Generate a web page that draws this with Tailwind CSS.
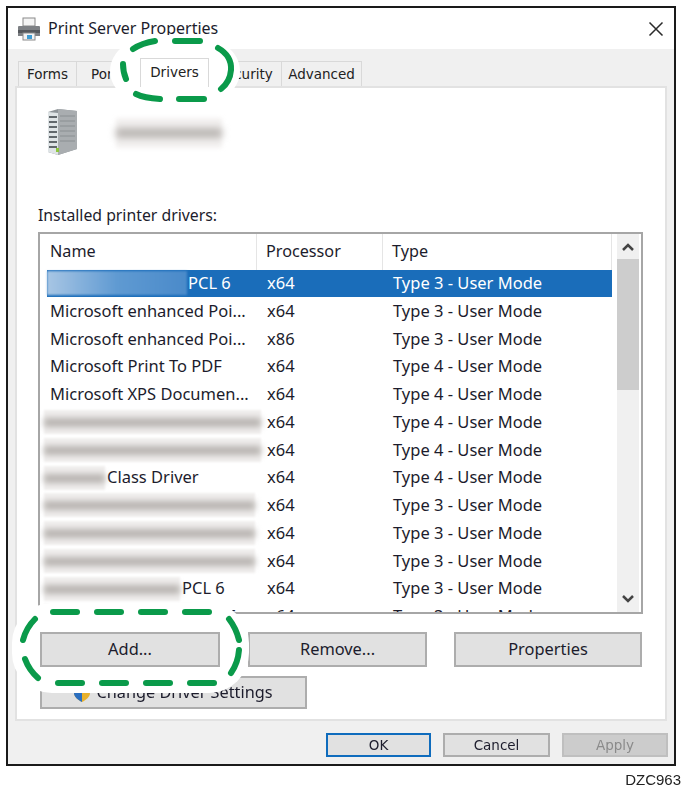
<!DOCTYPE html>
<html lang="en">
    <head>
        <meta charset="UTF-8">
        <meta name="viewport" content="width=device-width, initial-scale=1.0">
        <title>Print Server Properties</title>
        <script src="https://cdn.jsdelivr.net/npm/@tailwindcss/browser@4"></script>
    </head>
    <body class="bg-white h-[803px] w-[683px] overflow-hidden relative blur-[0.4px] font-['Noto_Sans',sans-serif] text-[#1c1c2c]">

        <!-- Dialog window -->
        <div class="ml-[6px] mt-[6px] w-[670px] h-[760px] border-2 border-[#1a1a1a] bg-[#f0f0f0] flex flex-col">

            <!-- Title bar -->
            <div class="h-[41px] bg-white flex items-center pl-[9px] pr-[10px] shrink-0">
                <svg class="w-[24px] h-[24px] mt-[1px]" viewBox="0 0 24 24">
                    <rect x="6" y="1" width="12" height="8" fill="#f4f4f4" stroke="#8a8a8a"/>
                    <path d="M2 9h20a1 1 0 0 1 1 1v9h-22v-9a1 1 0 0 1 1-1z" fill="#7d8084"/>
                    <rect x="1" y="13" width="22" height="3" fill="#55585c"/>
                    <rect x="6" y="16" width="12" height="7" fill="#f2f2f2" stroke="#8a8a8a"/>
                    <rect x="10" y="18" width="5" height="4" fill="#3f9bd0"/>
                </svg>
                <span class="ml-[7px] text-[16px] leading-none -mt-[2px]">Print Server Properties</span>
                <svg class="w-[16px] h-[16px] ml-auto" viewBox="0 0 16 16">
                    <path d="M1.500 1.500 14.500 14.500M14.500 1.500 1.500 14.500" stroke="#2a2a2a" stroke-width="1.500" fill="none"/>
                </svg>
            </div>

            <!-- Tabs and page -->
            <div class="flex-1 flex flex-col px-[7px] pt-[12px]">
                <div class="h-[25px] flex pl-[3px] font-['DejaVu_Sans',sans-serif] text-[13.5px] text-[#222]">
                    <div class="w-[59px] border border-b-0 border-[#d9d9d9] flex items-center justify-center">Forms</div>
                    <div class="w-[63px] border border-b-0 border-l-0 border-[#d9d9d9] flex items-center justify-center">Ports</div>
                    <div class="w-[69px] -mt-[3px] h-[29px] -mb-[1px] pb-[2px] z-20 bg-white border border-b-0 border-[#d9d9d9] flex items-center justify-center">Drivers</div>
                    <div class="w-[73px] border border-b-0 border-l-0 border-[#d9d9d9] flex items-center justify-center">Security</div>
                    <div class="w-[80px] border border-b-0 border-l-0 border-[#d9d9d9] flex items-center justify-center">Advanced</div>
                </div>

                <div class="h-[635px] bg-white border-2 border-[#e2e2e2] pl-[21px] pr-[21px] shrink-0">
                    <!-- Server name -->
                    <div class="flex items-start pt-[20px] pl-[9px] h-[100px]">
                        <svg class="w-[31px] h-[48px]" viewBox="0 0 31 48">
                            <path d="M1 4 11 1 30 3V41L11 47 1 44Z" fill="#8e9498"/>
                            <path d="M11 1 30 3V41L11 47Z" fill="#a9adb0"/>
                            <path d="M1 4 11 5V47L1 44Z" fill="#dfe4e6"/>
                            <path d="M2 9h8M2 14h8M2 19h8M2 24h8M2 29h8M2 34h8M2 39h8" stroke="#62686c" stroke-width="2"/>
                            <path d="M13 8h15M13 13h15M13 18h15M13 23h15M13 28h15M13 33h15" stroke="#8a8f92" stroke-width="1"/>
                            <rect x="9" y="40" width="3" height="4" fill="#8cc63f"/>
                        </svg>
                        <div class="relative ml-[38px] mt-[10px] w-[106px] h-[30px] bg-[#f3f1f0] blur-[2px]">
                            <div class="absolute inset-x-0 top-[10px] h-[10px] bg-[#b9b5b2] blur-[3px]"></div>
                        </div>
                    </div>

                    <p class="text-[15.8px] leading-[20px] mt-[17px] mb-[7px]">Installed printer drivers:</p>

                    <!-- Driver list -->
                    <div class="w-[605px] h-[382px] border-2 border-[#a6a6a6] flex overflow-hidden">
                        <div class="w-[577px] shrink-0 pl-[7px]">
                            <div class="h-[35.5px] flex items-center text-[16.2px] -ml-[7px] w-[572px]">
                                <div class="w-[217px] pl-[10px] h-full pb-[1px] flex items-center border-r border-[#e5e5e5]">Name</div>
                                <div class="w-[126px] pl-[9px] h-full pb-[1px] flex items-center border-r border-[#e5e5e5]">Processor</div>
                                <div class="flex-1 pl-[9px] h-full pb-[1px] flex items-center border-r border-[#e5e5e5]">Type</div>
                            </div>
                            <div id="rows"></div>
                        </div>
                        <!-- Scrollbar -->
                        <div class="w-[22px] bg-[#f0f0f0] flex flex-col items-center shrink-0">
                            <div class="h-[25px] w-full flex items-center justify-center">
                                <svg class="w-[12px] h-[8px]" viewBox="0 0 12 8"><path d="M1 7 6 2 11 7" stroke="#444" stroke-width="2.500" fill="none"/></svg>
                            </div>
                            <div class="h-[131px] w-full bg-[#cdcdcd]"></div>
                            <div class="flex-1"></div>
                            <div class="h-[25px] w-full flex items-center justify-center mb-[1px]">
                                <svg class="w-[12px] h-[8px]" viewBox="0 0 12 8"><path d="M1 1 6 6 11 1" stroke="#444" stroke-width="2.500" fill="none"/></svg>
                            </div>
                        </div>
                    </div>

                    <!-- Action buttons -->
                    <div class="flex mt-[18px] ml-[2px] text-[16.4px]">
                        <button class="relative z-20 w-[180px] h-[35px] bg-[#e1e1e1] border-2 border-[#adadad]">Add...</button>
                        <button class="w-[179px] h-[35px] ml-[28px] bg-[#e1e1e1] border-2 border-[#adadad]">Remove...</button>
                        <button class="w-[188px] h-[35px] ml-[27px] bg-[#e1e1e1] border-2 border-[#adadad]">Properties</button>
                    </div>
                    <button class="ml-[2px] mt-[9px] w-[267px] h-[33px] bg-[#e1e1e1] border-2 border-[#adadad] flex items-center justify-center gap-[6px] text-[16.3px]">
                        <svg class="w-[16px] h-[18px]" viewBox="0 0 16 18">
                            <path d="M8 0 16 3V9C16 13 12 16 8 18 4 16 0 13 0 9V3Z" fill="#e8b12c"/>
                            <path d="M8 0 16 3V9H8ZM8 9V18C4 16 0 13 0 9Z" fill="#2b6fc0"/>
                        </svg>
                        Change Driver Settings
                    </button>
                </div>

                <!-- Dialog buttons -->
                <div class="flex justify-end gap-[12px] mt-[12px] -mr-[1px] font-['DejaVu_Sans',sans-serif] text-[13.5px]">
                    <button class="w-[105px] h-[24px] pb-[2px] bg-[#e1e1e1] border-2 border-[#0f6cbd]">OK</button>
                    <button class="w-[107px] h-[24px] pb-[2px] bg-[#e1e1e1] border-2 border-[#adadad]">Cancel</button>
                    <button class="w-[106px] h-[24px] pb-[2px] bg-[#cccccc] border-2 border-[#bfbfbf] text-[#8a8a8a]">Apply</button>
                </div>
            </div>
        </div>

        <p class="text-right pr-[2px] mt-[5px] font-['Liberation_Sans',sans-serif] text-[15px] leading-[17px] text-[#222]">DZC963</p>

        <!-- Callouts around the Drivers tab and the Add button -->
        <svg class="absolute left-0 top-0 z-10 w-[683px] h-[803px] pointer-events-none" viewBox="0 0 683 803">
            <rect x="110" y="35" width="130" height="72" rx="48" fill="#fff"/>
            <rect x="12" y="603" width="237" height="90" rx="40" fill="#fff"/>
            <g fill="none" stroke="#0a9a4a" stroke-width="6" stroke-linecap="round">
                <path d="M133 49Q142 43 155 41"/>
                <path d="M175 41H200"/>
                <path d="M218 48Q232 56 231 70 230 82 221 89"/>
                <path d="M136 94Q144 98 160 99"/>
                <path d="M179 99H204"/>
                <path d="M123 64Q123 72 126 79"/>

                <path d="M53 612H77"/>
                <path d="M97 612H121"/>
                <path d="M141 612H165"/>
                <path d="M185 612H209"/>
                <path d="M229 619Q236 628 239 640"/>
                <path d="M239 650Q238 663 231 673"/>
                <path d="M58 683H82"/>
                <path d="M102 683H126"/>
                <path d="M146 683H170"/>
                <path d="M190 683H214"/>
                <path d="M35 619Q26 628 23 640"/>
                <path d="M25 659Q29 670 38 678"/>
            </g>
        </svg>

        <script>
            // blur = width of the smudged part of each name, 0 = plain text
            const drivers = [
                { blur: 140, name: 'PCL 6', cpu: 'x64', type: 'Type 3 - User Mode', selected: true },
                { blur: 0, name: 'Microsoft enhanced Poi...', cpu: 'x64', type: 'Type 3 - User Mode' },
                { blur: 0, name: 'Microsoft enhanced Poi...', cpu: 'x86', type: 'Type 3 - User Mode' },
                { blur: 0, name: 'Microsoft Print To PDF', cpu: 'x64', type: 'Type 4 - User Mode' },
                { blur: 0, name: 'Microsoft XPS Documen...', cpu: 'x64', type: 'Type 4 - User Mode' },
                { blur: 217, name: '', cpu: 'x64', type: 'Type 4 - User Mode' },
                { blur: 217, name: '', cpu: 'x64', type: 'Type 4 - User Mode' },
                { blur: 61, name: 'Class Driver', cpu: 'x64', type: 'Type 4 - User Mode' },
                { blur: 211, name: '', cpu: 'x64', type: 'Type 3 - User Mode' },
                { blur: 211, name: '', cpu: 'x64', type: 'Type 3 - User Mode' },
                { blur: 211, name: '', cpu: 'x64', type: 'Type 3 - User Mode' },
                { blur: 136, name: 'PCL 6', cpu: 'x64', type: 'Type 3 - User Mode' },
                { blur: 148, name: 'PCL 6', cpu: 'x64', type: 'Type 3 - User Mode' }
            ];

            const rows = document.getElementById('rows');
            drivers.forEach(d => {
                let smudge = '';
                if (d.selected) {
                    smudge = `<span class="inline-block h-[24px] mr-[1px] shrink-0 blur-[1px] bg-linear-to-r from-[#a8c6e4] via-[#5f9ad2] to-[#4a8aca]" style="width:${d.blur}px"></span>`;
                } else if (d.blur) {
                    smudge = `<span class="relative inline-block h-[24px] -ml-[3px] mr-[2px] shrink-0 blur-[1px] bg-[#f1efee]" style="width:${d.blur}px"><span class="absolute inset-x-0 top-[8px] h-[9px] bg-[#b5b1ae] blur-[3px]"></span></span>`;
                }
                rows.innerHTML += `
                    <div class="h-[27.75px] w-[565px] flex items-center text-[16.5px] ${d.selected ? 'bg-[#1a6dba] text-white' : ''}">
                        <div class="w-[220px] flex items-center whitespace-nowrap ${d.blur ? 'pl-0' : 'pl-[3px]'}">${smudge}${d.name}</div>
                        <div class="w-[126px]">${d.cpu}</div>
                        <div>${d.type}</div>
                    </div>
                `;
            });
        </script>
    </body>
</html>
